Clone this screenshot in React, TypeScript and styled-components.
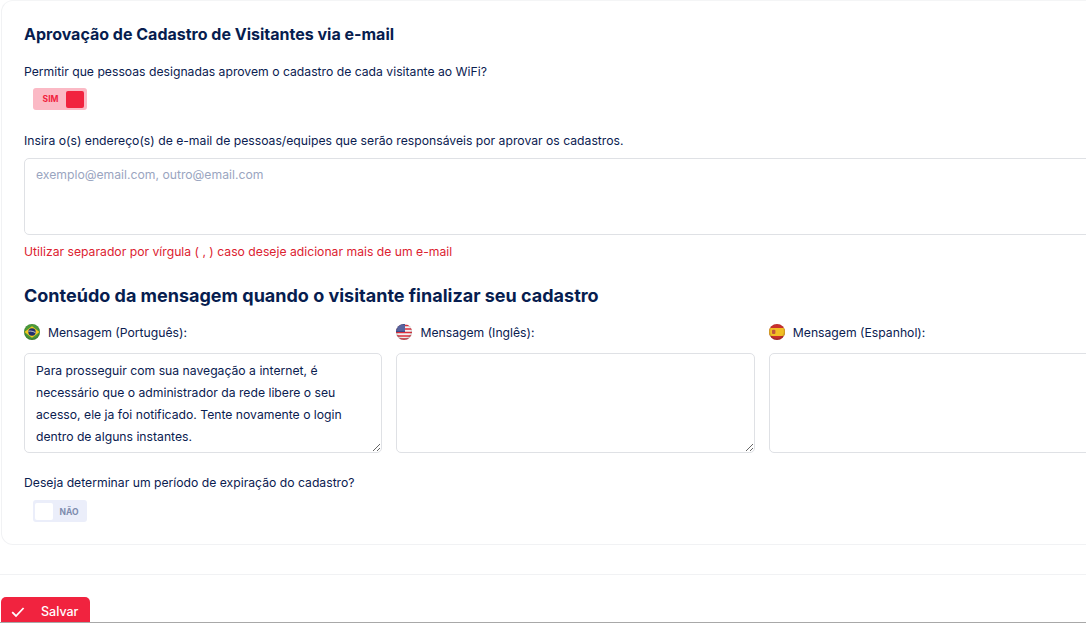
import React from 'react';
import styled, { createGlobalStyle } from 'styled-components';

const Global = createGlobalStyle`
	html, body {
		margin: 0;
		padding: 0;
		background: #fff;
		overflow: hidden;
	}
	* {
		box-sizing: border-box;
	}
`;

const Page = styled.div`
	width: 1086px;
	height: 623px;
	overflow: hidden;
	display: flex;
	flex-direction: column;
	font-family: Inter, 'Noto Sans', sans-serif;
	color: #0a2050;
	border-bottom: 1px solid #a8a8a8;
`;

const Card = styled.section`
	width: 1140px;
	height: 545px;
	flex: none;
	margin-left: 1px;
	padding: 23px 22px 0 22px;
	border: 1px solid #f1f2f4;
	border-top-color: #f4f5f6;
	border-radius: 12px;
`;

const Title = styled.h2<{ $size: number; $top: number }>`
	margin: ${(p) => p.$top}px 0 0;
	font-size: ${(p) => p.$size}px;
	line-height: 20px;
	font-weight: 700;
	color: #071d4f;
`;

const Label = styled.p<{ $top: number }>`
	margin: ${(p) => p.$top}px 0 0;
	font-size: 12.2px;
	line-height: 16px;
	color: #0a2050;
`;

const ToggleBox = styled.div<{ $on: boolean; $top: number }>`
	width: 54px;
	height: 22px;
	margin: ${(p) => p.$top}px 0 0 9px;
	padding: ${(p) => (p.$on ? '2px 3px 2px 2px' : '2px')};
	display: flex;
	flex-direction: ${(p) => (p.$on ? 'row' : 'row-reverse')};
	align-items: center;
	justify-content: space-between;
	border-radius: 3px;
	background: ${(p) => (p.$on ? '#fbb9c5' : '#ebeefa')};
`;

const ToggleText = styled.span<{ $on: boolean }>`
	flex: 1;
	padding-top: ${(p) => (p.$on ? 0 : 1)}px;
	text-align: center;
	font-size: 8.5px;
	font-weight: 700;
	color: ${(p) => (p.$on ? '#f1233f' : '#7e8cae')};
`;

const Knob = styled.span<{ $on: boolean }>`
	width: 18px;
	height: 17px;
	border-radius: 2px;
	background: ${(p) => (p.$on ? '#f1233f' : '#fff')};
`;

const EmailInput = styled.textarea`
	display: block;
	width: 100%;
	height: 77px;
	margin-top: 9px;
	padding: 8px 11px;
	border: 1px solid #dfe1e5;
	border-radius: 5px;
	font: 12.2px/16px Inter, 'Noto Sans', sans-serif;
	resize: none;
	&::placeholder {
		color: #9aa5bf;
		opacity: 1;
	}
`;

const Hint = styled.p`
	margin: 9px 0 0;
	font-size: 12.2px;
	line-height: 16px;
	color: #dc2230;
`;

const Columns = styled.div`
	display: grid;
	grid-template-columns: repeat(3, 358.4px);
	column-gap: 14px;
	margin-top: 18px;
`;

const Column = styled.div`
	display: flex;
	flex-direction: column;
`;

const FlagLabel = styled.div`
	display: flex;
	align-items: center;
	gap: 8px;
	height: 16px;
	font-size: 12.2px;
	color: #0a2050;
`;

const Message = styled.textarea`
	display: block;
	width: 100%;
	height: 100px;
	margin-top: 13px;
	padding: 6px 11px;
	border: 1px solid #dfe1e5;
	border-radius: 5px;
	font: 12.2px/21.9px Inter, 'Noto Sans', sans-serif;
	color: #0a2050;
	overflow: hidden;
	resize: vertical;
`;

const Footer = styled.footer`
	flex: 1;
	min-height: 0;
	margin-top: 29px;
	padding: 22px 0 0 1px;
	border-top: 1px solid #f1f2f4;
	overflow: hidden;
`;

const SaveButton = styled.button`
	display: flex;
	align-items: center;
	width: 89px;
	height: 34px;
	padding: 0 0 6px 10px;
	gap: 16px;
	border: 0;
	border-radius: 5px;
	background: #f1233f;
	color: #fff;
	font: 500 12.5px Inter, 'Noto Sans', sans-serif;

	svg {
		margin-top: 2px;
	}
`;

const FlagShade = ({ id }: { id: string }) => (
	<>
		<radialGradient id={id} cx="50%" cy="45%" r="55%">
			<stop offset="70%" stopColor="#000" stopOpacity="0" />
			<stop offset="100%" stopColor="#000" stopOpacity="0.25" />
		</radialGradient>
		<circle cx="8" cy="8" r="8" fill={`url(#${id})`} />
	</>
);

const BrazilFlag = () => (
	<svg width="16" height="16" viewBox="0 0 16 16">
		<circle cx="8" cy="8" r="8" fill="#4b9a3a" />
		<path d="M0.4 8 8 2.2 15.6 8 8 13.8Z" fill="#f3c91f" />
		<circle cx="8" cy="8" r="3.7" fill="#21306e" />
		<path d="M4.5 7.2c2.4-.4 5 .2 7 1.5" stroke="#e8e8e8" strokeWidth="0.8" fill="none" />
		<FlagShade id="brShade" />
	</svg>
);

const UsaFlag = () => (
	<svg width="16" height="16" viewBox="0 0 16 16">
		<defs>
			<clipPath id="usa">
				<circle cx="8" cy="8" r="8" />
			</clipPath>
		</defs>
		<g clipPath="url(#usa)">
			<rect width="16" height="16" fill="#f2f2f2" />
			<path d="M0 1.5h16M0 5h16M0 8.5h16M0 12h16M0 15h16" stroke="#dc2f3c" strokeWidth="1.6" />
			<rect width="9" height="8" fill="#3c4a8e" />
			<path d="M1.5 2h7M1.5 4h7M1.5 6h7" stroke="#c8cde6" strokeWidth="0.8" strokeDasharray="1 1" />
		</g>
		<FlagShade id="usShade" />
	</svg>
);

const SpainFlag = () => (
	<svg width="16" height="16" viewBox="0 0 16 16">
		<defs>
			<clipPath id="esp">
				<circle cx="8" cy="8" r="8" />
			</clipPath>
		</defs>
		<g clipPath="url(#esp)">
			<rect width="16" height="16" fill="#c9302c" />
			<rect y="4" width="16" height="8" fill="#f2bf24" />
			<rect x="3" y="5.8" width="3.4" height="4.2" rx="1" fill="#c0553a" />
		</g>
		<FlagShade id="esShade" />
	</svg>
);

const CheckIcon = () => (
	<svg width="14" height="12" viewBox="0 0 14 12">
		<path d="M1.2 6.2 5 10 12.6 2" stroke="#fff" strokeWidth="1.8" fill="none" />
	</svg>
);

const Toggle = ({ on, top }: { on: boolean; top: number }) => (
	<ToggleBox $on={on} $top={top}>
		<ToggleText $on={on}>{on ? 'SIM' : 'NÃO'}</ToggleText>
		<Knob $on={on} />
	</ToggleBox>
);

const messages = [
	{
		id: 'pt',
		label: 'Mensagem (Português):',
		flag: <BrazilFlag />,
		text: 'Para prosseguir com sua navegação a internet, é necessário que o administrador da rede libere o seu acesso, ele ja foi notificado. Tente novamente o login dentro de alguns instantes.',
	},
	{ id: 'en', label: 'Mensagem (Inglês):', flag: <UsaFlag />, text: '' },
	{ id: 'es', label: 'Mensagem (Espanhol):', flag: <SpainFlag />, text: '' },
];

const App = () => {
	return (
		<Page>
			<Global />
			<Card>
				<Title $size={16} $top={0}>
					Aprovação de Cadastro de Visitantes via e-mail
				</Title>
				<Label $top={20}>Permitir que pessoas designadas aprovem o cadastro de cada visitante ao WiFi?</Label>
				<Toggle on top={8} />
				<Label $top={23}>
					Insira o(s) endereço(s) de e-mail de pessoas/equipes que serão responsáveis por aprovar os cadastros.
				</Label>
				<EmailInput placeholder="exemplo@email.com, outro@email.com" />
				<Hint>Utilizar separador por vírgula ( , ) caso deseje adicionar mais de um e-mail</Hint>
				<Title $size={18} $top={26}>
					Conteúdo da mensagem quando o visitante finalizar seu cadastro
				</Title>
				<Columns>
					{messages.map((m) => (
						<Column key={m.id}>
							<FlagLabel>
								{m.flag}
								{m.label}
							</FlagLabel>
							<Message defaultValue={m.text} />
						</Column>
					))}
				</Columns>
				<Label $top={22}>Deseja determinar um período de expiração do cadastro?</Label>
				<Toggle on={false} top={9} />
			</Card>
			<Footer>
				<SaveButton>
					<CheckIcon />
					Salvar
				</SaveButton>
			</Footer>
		</Page>
	);
};

export default App;
